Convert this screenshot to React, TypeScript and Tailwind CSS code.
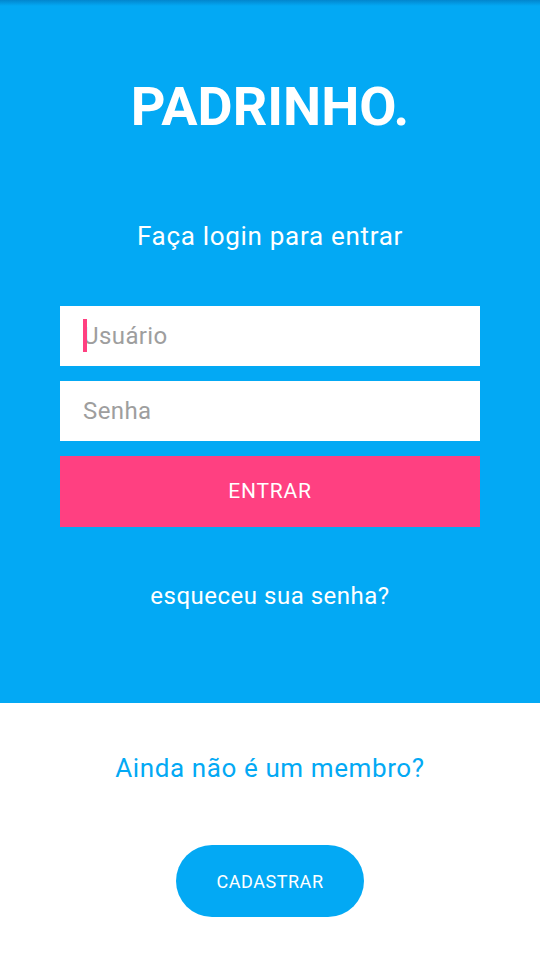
export default function App() {
  return (
    <div className="flex h-[960px] w-[540px] flex-col bg-white font-['Roboto',sans-serif]">
      <div className="relative flex h-[703px] flex-col items-center bg-[#03A9F4]">
        <div className="absolute inset-x-0 top-0 h-[6px] bg-gradient-to-b from-[#0277bd]/70 to-transparent" />
        <h1 className="mt-[74px] text-[54px] font-bold leading-[66px] text-white">PADRINHO.</h1>
        <p className="mt-[80px] text-[26px] leading-[32px] tracking-[0.7px] text-white">Faça login para entrar</p>
        <div className="mt-[54px] flex w-[420px] flex-col gap-[15px]">
          <div className="relative flex h-[60px] items-center bg-white px-[23px]">
            <span className="absolute left-[23px] top-[13px] h-[33px] w-[4px] bg-[#FF4081]" />
            <span className="text-[24px] tracking-[0.4px] text-[#9e9e9e]">Usuário</span>
          </div>
          <div className="flex h-[60px] items-center bg-white px-[23px]">
            <span className="text-[24px] tracking-[0.4px] text-[#9e9e9e]">Senha</span>
          </div>
          <button className="flex h-[71px] items-center justify-center bg-[#FF4081] text-[21px] tracking-[0.8px] text-white">
            ENTRAR
          </button>
        </div>
        <p className="mt-[53px] text-[24px] leading-[32px] tracking-[0.5px] text-white">esqueceu sua senha?</p>
      </div>
      <div className="flex flex-col items-center">
        <p className="mt-[49px] text-[26px] leading-[32px] tracking-[0.6px] text-[#03A9F4]">Ainda não é um membro?</p>
        <button className="mt-[61px] flex h-[72px] w-[188px] items-center justify-center rounded-full bg-[#03A9F4] text-[18px] tracking-[0.55px] text-white">
          CADASTRAR
        </button>
      </div>
    </div>
  );
}
